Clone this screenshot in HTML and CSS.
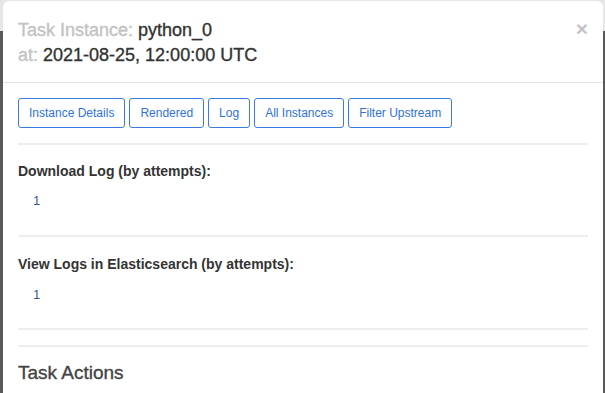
FILE: index.html
```html
<!DOCTYPE html>
<html lang="en">
<head>
    <meta charset="UTF-8">
    <meta name="viewport" content="width=device-width, initial-scale=1.0">
    <title>Task Instance</title>
    <link rel="stylesheet" href="styles.css">
</head>
<body>
    <div class="modal">
        <div class="modal-header">
            <h4 class="modal-title">
                <span class="label">Task Instance:</span> python_0<br>
                <span class="label">at:</span> 2021-08-25, 12:00:00 UTC
            </h4>
            <button class="close" type="button">&times;</button>
        </div>
        <div class="modal-body">
            <div class="btn-row">
                <a href="#" class="btn">Instance Details</a>
                <a href="#" class="btn">Rendered</a>
                <a href="#" class="btn">Log</a>
                <a href="#" class="btn">All Instances</a>
                <a href="#" class="btn">Filter Upstream</a>
            </div>
            <hr>
            <div class="section">
                <h5>Download Log (by attempts):</h5>
                <div class="attempts"><a href="#">1</a></div>
            </div>
            <hr class="mid">
            <div class="section">
                <h5>View Logs in Elasticsearch (by attempts):</h5>
                <div class="attempts"><a href="#">1</a></div>
            </div>
            <hr class="tight">
            <hr class="last">
            <h4 class="actions-title">Task Actions</h4>
        </div>
    </div>
</body>
</html>
```

FILE: styles.css
```css
body {
    font-family: "Liberation Sans", Arial, sans-serif;
    margin: 0;
    padding: 0;
    height: 100vh;
    overflow: hidden;
    background: linear-gradient(to bottom, #e6e6e6 0, #e6e6e6 31px, #5a5a5a 31px);
}
.modal {
    background: #fff;
    margin: 1px 2px 0 3px;
    height: calc(100vh - 1px);
    border-radius: 6px 6px 0 0;
    box-sizing: border-box;
}
.modal-header {
    display: flex;
    justify-content: space-between;
    align-items: flex-start;
    padding: 17px 15px 14px;
    border-bottom: 1px solid #e5e5e5;
}
.modal-title {
    margin: 0;
    font-size: 18px;
    line-height: 25px;
    font-weight: normal;
    color: #333;
    -webkit-text-stroke: 0.35px currentColor;
}
.label {
    color: #c2c2c2;
}
.close {
    background: none;
    border: 0;
    padding: 0;
    margin-top: 0;
    font-family: "Liberation Sans", Arial, sans-serif;
    font-size: 21px;
    font-weight: bold;
    line-height: 1;
    color: #c4c4c4;
    cursor: pointer;
}
.modal-body {
    padding: 15px 15px 0;
}
.btn-row {
    display: flex;
    gap: 4px;
}
.btn {
    display: inline-block;
    padding: 5px 10px;
    font-size: 12px;
    line-height: 18px;
    color: #2f73d9;
    border: 1px solid #3a7be0;
    border-radius: 3px;
    text-decoration: none;
    background: #fff;
}
hr {
    border: 0;
    border-top: 2px solid #eeeeee;
    margin: 15px 0 17px;
}
.section h5 {
    margin: 0;
    font-size: 14px;
    line-height: 18px;
    font-weight: bold;
    color: #333;
}
.attempts {
    margin: 12px 0 0 15px;
    font-size: 13px;
    line-height: 18px;
}
.section + hr {
    margin-top: 25px;
}
hr.mid {
    margin-bottom: 18px;
}
hr.mid + .section .attempts {
    margin-top: 13px;
}
hr.tight {
    margin: 24px 0 15px;
}
hr.last {
    margin: 0;
}
.attempts a {
    color: #35598c;
    text-decoration: none;
}
.actions-title {
    margin: 14px 0 0;
    font-size: 19px;
    line-height: 24px;
    font-weight: normal;
    color: #444;
    -webkit-text-stroke: 0.35px currentColor;
}
```
